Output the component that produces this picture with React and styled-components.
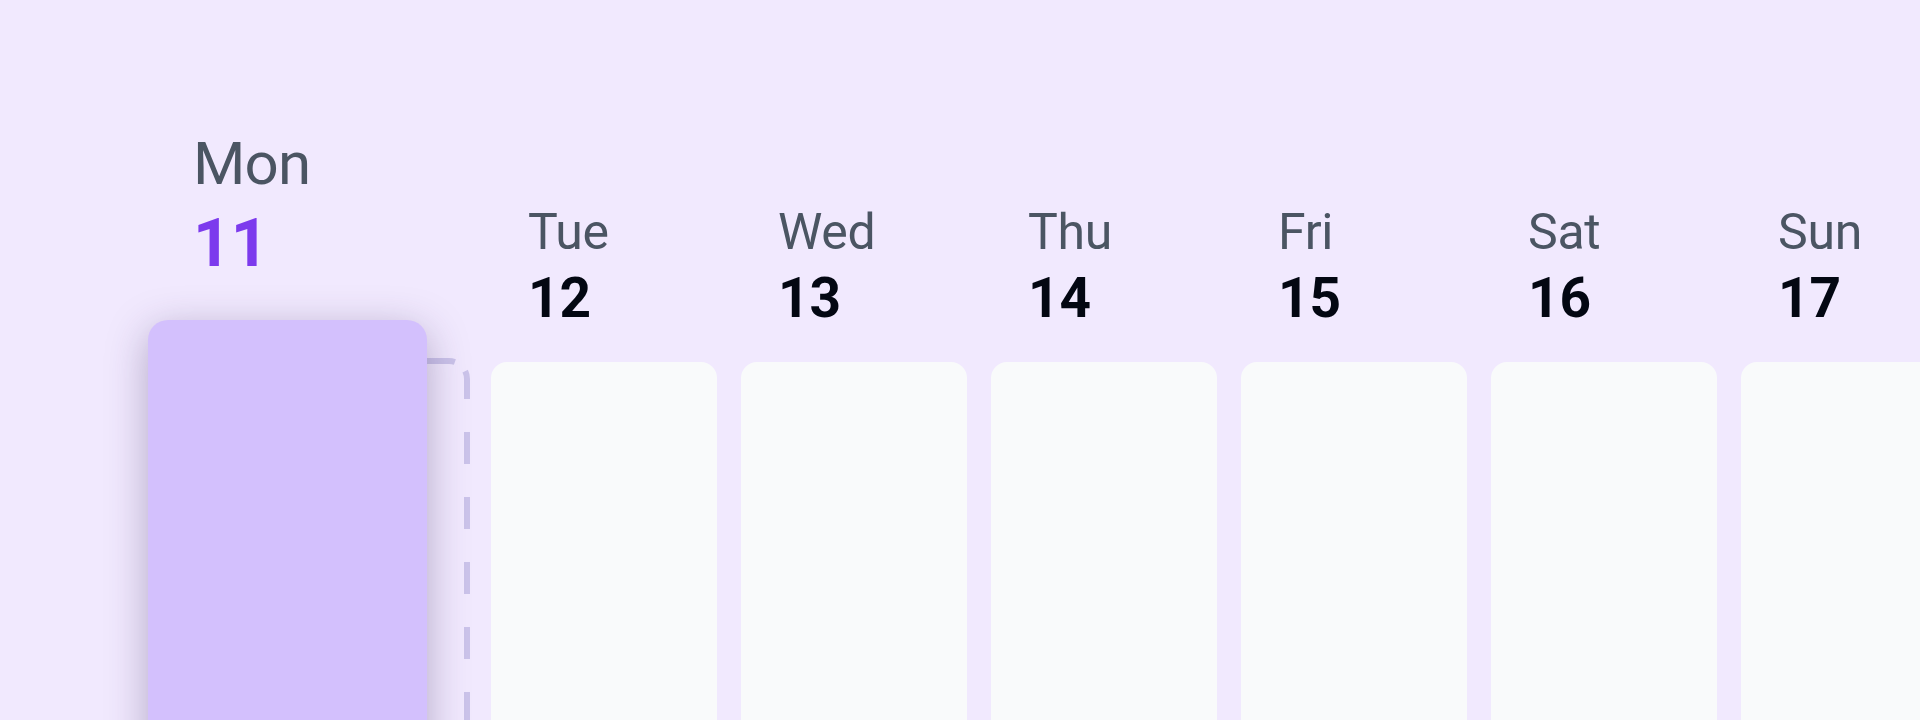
import React from 'react';
import styled, { createGlobalStyle } from 'styled-components';

const GlobalStyle = createGlobalStyle`
  html, body {
    margin: 0;
    padding: 0;
  }
  body {
    font-family: Roboto, "Liberation Sans", sans-serif;
  }
`;

const Board = styled.div`
  position: relative;
  width: 100vw;
  height: 720px;
  overflow: hidden;
  background: #f1e9fe;
  box-sizing: border-box;
  padding: 207px 0 0 241px;
`;

const Week = styled.div`
  display: flex;
  gap: 24px;
`;

const Column = styled.div`
  width: 226px;
  flex-shrink: 0;
`;

const Header = styled.div`
  padding-left: 37px;
  visibility: ${(p) => (p.$hidden ? 'hidden' : 'visible')};
`;

const DayName = styled.div`
  font-size: 50px;
  line-height: 1;
  font-weight: 400;
  color: #4b5563;
  letter-spacing: -0.3px;
`;

const DayNumber = styled.div`
  margin-top: 14px;
  font-size: 55px;
  line-height: 1;
  font-weight: 700;
  color: #030712;
`;

const Card = styled.div`
  margin-top: 36px;
  height: 520px;
  border-radius: 16px;
  background: #f9fafb;
`;

const Slot = styled.div`
  position: relative;
  margin-top: 36px;
  height: 520px;

  svg {
    position: absolute;
    left: 0;
    top: 0;
    overflow: visible;
  }
`;

/* the column being dragged, floating over the board */
const DragColumn = styled.div`
  position: absolute;
  left: 148px;
  top: 134px;
  width: 279px;
`;

const DragHeader = styled.div`
  padding-left: 45px;
`;

const DragName = styled(DayName)`
  font-size: 60px;
  letter-spacing: -0.8px;
`;

const DragNumber = styled(DayNumber)`
  margin-top: 17px;
  font-size: 66px;
  color: #7c3aed;
`;

const DragCard = styled.div`
  margin-top: 43px;
  height: 520px;
  border-radius: 20px;
  background: #d3c0fd;
  box-shadow: 0 10px 40px rgba(60, 40, 90, 0.34);
`;

const days = [
  { name: 'Tue', num: 12 },
  { name: 'Wed', num: 13 },
  { name: 'Thu', num: 14 },
  { name: 'Fri', num: 15 },
  { name: 'Sat', num: 16 },
  { name: 'Sun', num: 17 },
];

// dashed outline left behind where the dragged column used to sit
function Placeholder() {
  return (
    <Slot>
      <svg width="226" height="520">
        <path
          d="M0 -1 H208 A18 18 0 0 1 226 17 V520"
          fill="none"
          stroke="#cbc3ea"
          strokeWidth="6"
          strokeDasharray="214 14 28 33 32 33 32 33 32 33 32 33 32 33 32 33 32 33 32 33 32 33 32 33"
        />
      </svg>
    </Slot>
  );
}

export default function App() {
  return (
    <>
      <GlobalStyle />
      <Board>
        <Week>
          <Column>
            <Header $hidden>
              <DayName>Mon</DayName>
              <DayNumber>11</DayNumber>
            </Header>
            <Placeholder />
          </Column>
          {days.map((d) => (
            <Column key={d.name}>
              <Header>
                <DayName>{d.name}</DayName>
                <DayNumber>{d.num}</DayNumber>
              </Header>
              <Card />
            </Column>
          ))}
        </Week>
        <DragColumn>
          <DragHeader>
            <DragName>Mon</DragName>
            <DragNumber>11</DragNumber>
          </DragHeader>
          <DragCard />
        </DragColumn>
      </Board>
    </>
  );
}
